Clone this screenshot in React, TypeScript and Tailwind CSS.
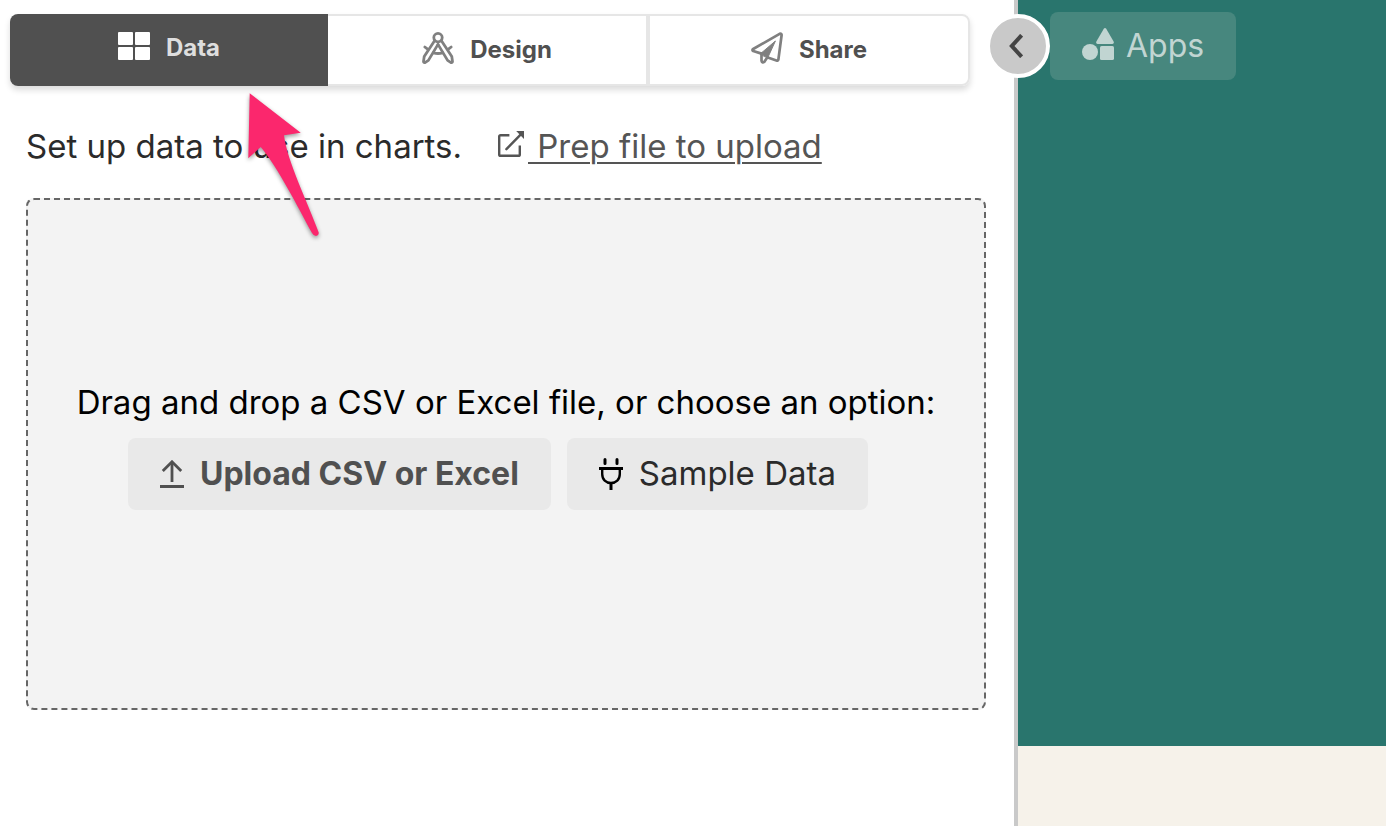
import React from "react";

type IconProps = { className?: string };

const GridIcon = ({ className }: IconProps) => (
  <svg className={className} viewBox="0 0 32 28" fill="currentColor" aria-hidden="true">
    <rect x="0" y="0" width="15" height="13" rx="1" />
    <rect x="17" y="0" width="15" height="13" rx="1" />
    <rect x="0" y="15" width="15" height="13" rx="1" />
    <rect x="17" y="15" width="15" height="13" rx="1" />
  </svg>
);

const CompassIcon = ({ className }: IconProps) => (
  <svg
    className={className}
    viewBox="0 0 32 32"
    fill="none"
    stroke="currentColor"
    strokeWidth="2.8"
    strokeLinecap="round"
    strokeLinejoin="round"
    aria-hidden="true"
  >
    <circle cx="16" cy="5.6" r="4.2" />
    <path d="M12.4 9 2.2 24.6 1.5 29.4Q1.6 30.8 3 30.6L6.4 28.4 16 12.4" />
    <path d="M19.6 9 29.8 24.6 30.5 29.4Q30.4 30.8 29 30.6L25.6 28.4 16 12.4" />
    <path d="M2.8 15 5.6 17.2M29.2 15 26.4 17.2M11.4 20.8Q16 22.2 20.6 20.8" />
  </svg>
);

const PlaneIcon = ({ className }: IconProps) => (
  <svg
    className={className}
    viewBox="0 0 32 32"
    fill="none"
    stroke="currentColor"
    strokeWidth="2.7"
    strokeLinecap="round"
    strokeLinejoin="round"
    aria-hidden="true"
  >
    <path d="M10.5 21.6 2.2 19Q.6 18 2.2 17L28.6 1.8Q30.8 1 30.6 3.2L27.4 27.4Q27 29 25.4 28.4L16.8 25.4" />
    <path d="M10.5 21.4V28.6Q11.2 31.4 13.2 30L16.4 25.2" />
    <path d="M9.6 21.6 24.4 9 16.8 25.6 13.6 24.6Z" fill="currentColor" strokeWidth="1" />
  </svg>
);

const ExternalIcon = ({ className }: IconProps) => (
  <svg
    className={className}
    viewBox="0 0 26 26"
    fill="none"
    stroke="currentColor"
    strokeWidth="2.4"
    strokeLinejoin="round"
    aria-hidden="true"
  >
    <path d="M11.4 4.2H2.6Q1.2 4.2 1.2 5.6V23.4Q1.2 24.8 2.6 24.8H20.4Q21.8 24.8 21.8 23.4V14.6" />
    <path d="M8.4 18.2 22.6 3.6" strokeLinecap="round" />
    <path d="M18.2 0H26V8Z" fill="currentColor" stroke="none" />
  </svg>
);

const UploadIcon = ({ className }: IconProps) => (
  <svg className={className} viewBox="0 0 24 28" fill="none" stroke="currentColor" strokeWidth="2.8" aria-hidden="true">
    <path d="M12 22V2" />
    <path d="M2.8 11 12 1.8 21.2 11" />
    <path d="M0 26.5H24" strokeWidth="3" />
  </svg>
);

const PlugIcon = ({ className }: IconProps) => (
  <svg className={className} viewBox="0 0 24 32" fill="none" stroke="currentColor" aria-hidden="true">
    <path d="M6 1.6V5.6M18 1.6V5.6" strokeWidth="3" strokeLinecap="round" />
    <path d="M0 10.5H24" strokeWidth="3" />
    <path d="M3.2 11V16C3.2 21.6 7 25 12 25S20.8 21.6 20.8 16V11" strokeWidth="2.4" />
    <path d="M12 25V32" strokeWidth="3" />
  </svg>
);

const ShapesIcon = ({ className }: IconProps) => (
  <svg className={className} viewBox="0 0 32 32" fill="currentColor" aria-hidden="true">
    <path d="M21.8.8Q23 -.8 24.2.8L31.6 13.4Q32.4 15.8 30.4 16H15.6Q13.6 15.8 14.4 13.4Z" />
    <circle cx="8" cy="24" r="8" />
    <rect x="18" y="18" width="14" height="14" rx="1.6" />
  </svg>
);

const PointerArrow = ({ className }: IconProps) => (
  <svg className={className} viewBox="0 0 72 145" fill="currentColor" aria-hidden="true">
    <path d="M1.7.3 52.7 39.7 36 42.3C39 68 60 110 70.7 139.6Q71 142.6 68 143Q65.6 143 64 140C49 112 30 75 12.7 54L.3 65.3Z" />
  </svg>
);

export default function App() {
  return (
    <div className="grid min-h-screen grid-cols-[1018fr_368fr] bg-white font-['Inter',sans-serif] text-[#2b2b2b]">
      <main className="relative min-w-0 border-r-4 border-[#c9c9c9] pt-3.5 pb-10">
        <nav className="mr-11 ml-2.5 grid h-18 grid-cols-[318fr_320fr_322fr] rounded-lg text-2xl font-bold shadow-[0_4px_6px_rgba(0,0,0,0.14)]">
          <button className="flex items-center justify-center gap-4 rounded-l-lg bg-[#505050] pb-1 text-[#dedede]">
            <GridIcon className="mb-1 h-7 w-8 text-white" />
            Data
          </button>
          <button className="flex items-center justify-center gap-4 border-y-2 border-r-2 border-[#e6e6e6] bg-white text-[#505050]">
            <CompassIcon className="mb-1 size-8 text-[#808080]" />
            Design
          </button>
          <button className="flex items-center justify-center gap-4 rounded-r-lg border-2 border-[#e6e6e6] bg-white text-[#505050]">
            <PlaneIcon className="mb-1 size-8 text-[#808080]" />
            Share
          </button>
        </nav>

        <div className="mt-10 ml-6.5 flex h-10 items-center text-[33px] leading-10">
          <p>Set up data to use in charts.</p>
          <a href="#prep" className="ml-9 flex items-center gap-1 text-[#555555]">
            <ExternalIcon className="mb-1 h-6.5 w-6.5" />
            <span className="whitespace-pre underline decoration-2 underline-offset-4"> Prep file to upload</span>
          </a>
        </div>

        <section className="mt-8 mr-7 ml-6.5 flex h-128 flex-col items-center justify-center rounded-lg border-2 border-dashed border-[#666666] bg-[#f3f3f3] pb-4">
          <p className="text-[33px] leading-10 text-black">Drag and drop a CSV or Excel file, or choose an option:</p>
          <div className="mt-4 mr-4 flex gap-4">
            <button className="flex h-18 items-center gap-4 rounded-lg bg-[#e9e9e9] px-8 text-[32px] font-bold text-[#505050]">
              <UploadIcon className="h-7 w-6" />
              Upload CSV or Excel
            </button>
            <button className="flex h-18 items-center gap-4 rounded-lg bg-[#e9e9e9] px-8 text-[33px]">
              <PlugIcon className="h-8 w-6 text-black" />
              Sample Data
            </button>
          </div>
        </section>

        <PointerArrow className="pointer-events-none absolute top-[93px] left-[248px] h-[145px] w-[72px] text-[#fb276d] drop-shadow-[0_2px_2px_rgba(0,0,0,0.4)]" />
      </main>

      <aside className="relative flex flex-col">
        <div className="flex-1 bg-[#29756d] pt-3 pl-8">
          <button className="flex h-17 items-center gap-3 rounded-lg bg-[#47877e] px-8 text-[32px] text-[#c1d5d2]">
            <ShapesIcon className="mb-1 size-8" />
            Apps
          </button>
        </div>
        <div className="h-20 bg-[#f6f2ea]" />
        <button
          aria-label="Collapse panel"
          className="absolute top-3.5 -left-8 flex size-16 items-center justify-center rounded-full border-4 border-white bg-[#c9c9c9] pr-1 text-[#444444]"
        >
          <svg
            className="h-6 w-3.5"
            viewBox="0 0 14 24"
            fill="none"
            stroke="currentColor"
            strokeWidth="4"
            aria-hidden="true"
          >
            <path d="M12.6 1.2 2.8 12 12.6 22.8" />
          </svg>
        </button>
      </aside>
    </div>
  );
}
